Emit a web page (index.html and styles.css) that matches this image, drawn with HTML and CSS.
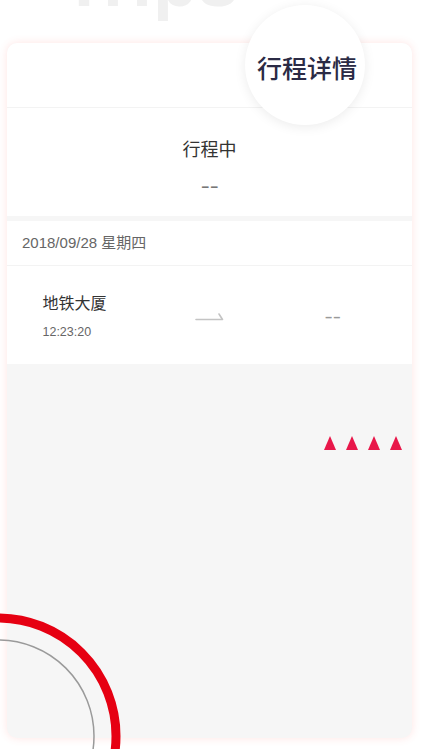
FILE: index.html
```html
<!DOCTYPE html>
<html lang="zh">
<head>
<meta charset="utf-8">
<link rel="stylesheet" href="styles.css">
</head>
<body>
<div class="page">
  <div class="top">
    <div class="bg-title">Trips</div>
  </div>
  <div class="card">
    <div class="card-head"></div>
    <div class="status">
      <div class="status-text">行程中</div>
      <div class="status-sub">--</div>
    </div>
    <div class="date-row">2018/09/28 星期四</div>
    <div class="trip-row">
      <div class="col col-left">
        <div class="place">
          <div class="place-name">地铁大厦</div>
          <div class="place-time">12:23:20</div>
        </div>
      </div>
      <div class="col col-mid">
        <svg class="arrow" width="30" height="12" viewBox="0 0 30 12">
          <path d="M1 9.5 H27.5 L24 4" fill="none" stroke="#c4c4c4" stroke-width="1.6" stroke-linecap="round" stroke-linejoin="round"/>
        </svg>
      </div>
      <div class="col col-right">--</div>
    </div>
    <div class="marks">
      <span class="tri"></span><span class="tri"></span><span class="tri"></span><span class="tri"></span>
    </div>
  </div>
  <div class="badge">行程详情</div>
  <svg class="rings" width="140" height="149" viewBox="0 0 140 149">
    <circle cx="-2" cy="136" r="118" fill="none" stroke="#e60012" stroke-width="9"/>
    <circle cx="-2" cy="136" r="96" fill="none" stroke="#9a9a9a" stroke-width="1.5"/>
  </svg>
</div>
</body>
</html>
```
FILE: styles.css
```css
* { box-sizing: border-box; }
html, body { margin: 0; padding: 0; background: #ffffff; }
body {
  font-family: "Liberation Sans", "Noto Sans CJK SC", sans-serif;
  width: 425px;
  height: 749px;
  overflow: hidden;
}
.page {
  position: relative;
  width: 425px;
  height: 749px;
  overflow: hidden;
}
.top {
  height: 43px;
  overflow: hidden;
  padding-left: 62px;
}
.bg-title {
  font-family: "Liberation Sans", sans-serif;
  font-weight: bold;
  font-size: 72px;
  line-height: 72px;
  margin-top: -55px;
  color: #f0f0f0;
  letter-spacing: 1px;
}
.card {
  width: 405px;
  height: 695px;
  margin-left: 7px;
  background: #f6f6f6;
  border-radius: 10px;
  box-shadow: 0 0 9px rgba(255, 90, 80, 0.16);
  display: flex;
  flex-direction: column;
}
.card-head {
  height: 65px;
  background: #fff;
  border-radius: 10px 10px 0 0;
  border-bottom: 1px solid #f3f3f3;
}
.status {
  background: #fff;
  padding: 29px 0 19px;
  display: flex;
  flex-direction: column;
  align-items: center;
  margin-bottom: 5px;
}
.status-text {
  font-size: 18px;
  line-height: 26px;
  color: #333;
}
.status-sub {
  margin-top: 12px;
  font-size: 20px;
  line-height: 22px;
  color: #777;
  transform: scaleX(1.35);
}
.date-row {
  background: #fff;
  height: 45px;
  line-height: 44px;
  padding-left: 15px;
  font-size: 15px;
  color: #666;
  border-bottom: 1px solid #f3f3f3;
}
.trip-row {
  background: #fff;
  height: 98px;
  display: grid;
  grid-template-columns: 1fr 1fr 1fr;
  align-items: center;
}
.col-left {
  display: flex;
  justify-content: center;
}
.place-name {
  font-size: 16px;
  line-height: 22px;
  color: #333;
  font-family: "Noto Sans CJK SC", sans-serif;
}
.place-time {
  margin-top: 11px;
  font-size: 12.5px;
  line-height: 16px;
  color: #666;
}
.col-mid {
  display: flex;
  justify-content: center;
  padding-top: 2px;
}
.col-right {
  text-align: center;
  padding-right: 18px;
  font-size: 19px;
  color: #999;
  padding-top: 3px;
  transform: scaleX(1.3);
}
.marks {
  display: flex;
  justify-content: flex-end;
  gap: 10px;
  padding-right: 10px;
  margin-top: 72px;
}
.tri {
  width: 0;
  height: 0;
  border-left: 6px solid transparent;
  border-right: 6px solid transparent;
  border-bottom: 14px solid #e8174a;
}
.badge {
  position: absolute;
  left: 245px;
  top: 5px;
  width: 120px;
  height: 120px;
  border-radius: 50%;
  background: #fff;
  box-shadow: 0 2px 12px rgba(0, 0, 0, 0.08);
  display: flex;
  align-items: center;
  justify-content: center;
  font-family: "Noto Sans CJK SC", sans-serif;
  font-size: 25px;
  font-weight: 500;
  color: #2b2b45;
  padding-top: 3px;
  padding-left: 4px;
}
.rings {
  position: absolute;
  left: 0;
  top: 600px;
}
```
